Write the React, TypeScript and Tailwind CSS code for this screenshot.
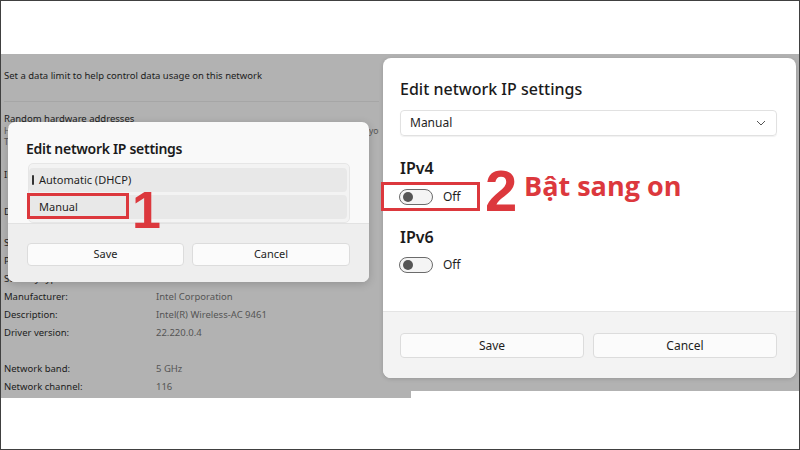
import React from "react";

const RED = "#dc383d";

function Toggle() {
  return (
    <div className="w-[34px] h-[16px] rounded-full border border-[#6b6b6b] bg-[#f4f4f4] flex items-center pl-[3px]">
      <div className="w-[10px] h-[10px] rounded-full bg-[#555]" />
    </div>
  );
}

function BgRow({ label, value }: { label: string; value?: string }) {
  return (
    <div className="flex h-[18px] items-center text-[9.5px] leading-none">
      <div className="w-[152px] text-[#1c1c1c]">{label}</div>
      {value && <div className="text-[#555]">{value}</div>}
    </div>
  );
}

export default function App() {
  return (
    <div
      className="w-[800px] h-[450px] bg-white border border-[#404040] flex flex-col overflow-hidden"
      style={{ fontFamily: '"Noto Sans", "Open Sans", sans-serif' }}
    >
      <div className="h-[53px] shrink-0" />
      <div className="flex items-start">
        {/* Left screenshot */}
        <div className="relative w-[410px] h-[344px] shrink-0 bg-[#b2b2b2] pl-[3px] flex flex-col">
          <div className="h-[39px] flex items-center text-[9.5px] text-[#1c1c1c] pt-[5px]">
            Set a data limit to help control data usage on this network
          </div>
          <div className="h-px bg-[#a6a6a6] w-[378px] mt-[8px]" />
          <div className="text-[9.5px] text-[#1c1c1c] mt-[11px] leading-[12px]">Random hardware addresses</div>
          <div className="text-[8.5px] text-[#555] leading-[11px] whitespace-nowrap">
            Help protect your privacy by making it harder for people to track your device location when you
          </div>
          <div className="text-[8.5px] text-[#555] leading-[11px]">The setting applies to new connections.</div>
          <div className="mt-[22px] w-[5px] overflow-hidden whitespace-nowrap text-[9.5px] text-[#1c1c1c] leading-[12px]">
            IP assignment:
          </div>
          <div className="mt-[25px] w-[5px] overflow-hidden whitespace-nowrap text-[9.5px] text-[#1c1c1c] leading-[12px]">
            DNS server assignment:
          </div>
          <div className="mt-[16px]">
            <BgRow label="SSID:" />
            <BgRow label="Protocol:" />
            <BgRow label="Security type:" value="WPA2-Personal" />
            <BgRow label="Manufacturer:" value="Intel Corporation" />
            <BgRow label="Description:" value="Intel(R) Wireless-AC 9461" />
            <BgRow label="Driver version:" value="22.220.0.4" />
            <div className="h-[18px]" />
            <BgRow label="Network band:" value="5 GHz" />
            <BgRow label="Network channel:" value="116" />
          </div>

          {/* Left dialog */}
          <div className="absolute left-[7px] top-[68px] w-[361px] h-[160px] rounded-[7px] bg-[#f9f9f9] shadow-[0_2px_8px_rgba(0,0,0,0.18)] overflow-hidden flex flex-col">
            <div className="px-[18px] pt-[17px]">
              <div className="text-[14px] font-semibold tracking-[-0.3px] text-[#1b1b1b] leading-[20px]">
                Edit network IP settings
              </div>
              <div className="mt-[4px] ml-[2px] w-[322px] h-[60px] rounded-[5px] bg-[#f3f3f3] border border-[#e6e6e6] flex flex-col gap-[3px] pt-[4px] pr-[2px]">
                <div className="relative h-[24px] rounded-[4px] bg-[#e8e8e8] flex items-center pl-[10px] text-[11px] text-[#1e1e1e]">
                  <div className="absolute left-[3px] top-[7px] w-[2px] h-[10px] bg-[#333] rounded" />
                  Automatic (DHCP)
                </div>
                <div className="h-[24px] rounded-[4px] bg-[#e8e8e8] flex items-center pl-[10px] text-[11px] text-[#1e1e1e]">
                  Manual
                </div>
              </div>
            </div>
            <div className="mt-auto h-[59px] bg-[#eeeeee] border-t border-[#e2e2e2] flex gap-[8px] pl-[19px] pt-[19px]">
              <div className="w-[157px] h-[23px] rounded-[4px] bg-[#fbfbfb] border border-[#dcdcdc] flex items-center justify-center text-[11px] text-[#1e1e1e]">
                Save
              </div>
              <div className="w-[158px] h-[23px] rounded-[4px] bg-[#fbfbfb] border border-[#dcdcdc] flex items-center justify-center text-[11px] text-[#1e1e1e]">
                Cancel
              </div>
            </div>
          </div>

          {/* Annotation 1 */}
          <div className="absolute left-[26px] top-[139px] w-[102px] h-[26px] border-[3px]" style={{ borderColor: RED }} />
          <div
            className="absolute left-[131px] top-[130px] text-[52px] font-bold leading-none"
            style={{ color: RED, fontFamily: '"Liberation Sans", Arial, sans-serif' }}
          >
            1
          </div>
        </div>

        {/* Right screenshot */}
        <div className="relative -ml-[32px] w-[422px] h-[337px] shrink-0 bg-[#b2b2b2] pl-[4px] pt-[4px] pr-[5px]">
          <div className="w-[413px] h-[320px] bg-white rounded-[8px] overflow-hidden flex flex-col shadow-[0_1px_4px_rgba(0,0,0,0.15)]">
            <div className="pl-[17px] pr-[19px] pt-[20px]">
              <div className="text-[16px] font-medium text-[#1b1b1b] leading-[23px]">Edit network IP settings</div>
              <div className="mt-[9px] h-[26px] rounded-[4px] border border-[#e1e1e1] shadow-[0_1px_1px_rgba(0,0,0,0.06)] flex items-center justify-between pl-[9px] pr-[10px] text-[12px] text-[#1e1e1e]">
                <span>Manual</span>
                <svg width="10" height="6" viewBox="0 0 10 6" fill="none">
                  <path d="M1 1l4 4 4-4" stroke="#555" strokeWidth="1" />
                </svg>
              </div>
              <div className="mt-[21px] text-[16px] font-semibold text-[#1b1b1b] leading-[22px]">IPv4</div>
              <div className="mt-[9px] flex items-center gap-[10px] text-[12px] text-[#1e1e1e] -ml-[1px]">
                <Toggle />
                <span>Off</span>
              </div>
              <div className="mt-[20px] text-[16px] font-semibold text-[#1b1b1b] leading-[22px]">IPv6</div>
              <div className="mt-[8px] flex items-center gap-[10px] text-[12px] text-[#1e1e1e] -ml-[1px]">
                <Toggle />
                <span>Off</span>
              </div>
            </div>
            <div className="mt-auto h-[67px] bg-[#f3f3f3] border-t border-[#e4e4e4] flex gap-[9px] pl-[17px] pt-[21px]">
              <div className="w-[184px] h-[25px] rounded-[4px] bg-[#fbfbfb] border border-[#dcdcdc] flex items-center justify-center text-[12px] text-[#1e1e1e]">
                Save
              </div>
              <div className="w-[184px] h-[25px] rounded-[4px] bg-[#fbfbfb] border border-[#dcdcdc] flex items-center justify-center text-[12px] text-[#1e1e1e]">
                Cancel
              </div>
            </div>
          </div>

          {/* Annotation 2 */}
          <div className="absolute left-[2px] top-[128px] w-[99px] h-[29px] border-[3px]" style={{ borderColor: RED }} />
          <div
            className="absolute left-[106px] top-[108px] text-[58px] font-bold leading-none"
            style={{ color: RED, fontFamily: '"Liberation Sans", Arial, sans-serif' }}
          >
            2
          </div>
          <div
            className="absolute left-[145px] top-[118px] text-[27px] font-bold leading-none whitespace-nowrap"
            style={{ color: RED, fontFamily: '"Open Sans", "Noto Sans", sans-serif' }}
          >
            Bật sang on
          </div>
        </div>
      </div>
    </div>
  );
}
